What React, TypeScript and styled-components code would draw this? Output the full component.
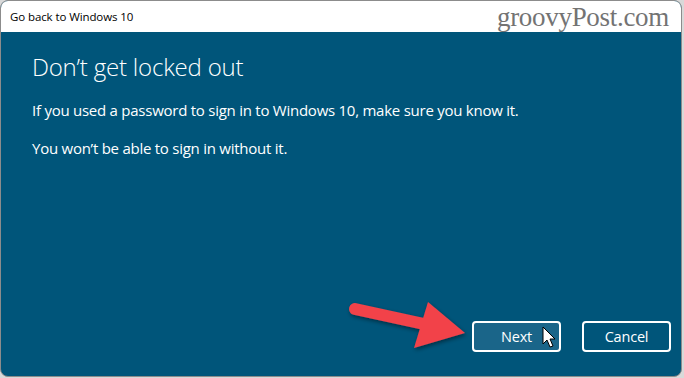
import styled, { createGlobalStyle } from 'styled-components';

const GlobalStyle = createGlobalStyle`
  html, body {
    margin: 0;
    padding: 0;
    background: #d9d9d9;
  }
  #root {
    width: 684px;
    height: 378px;
  }
`;

const Window = styled.div`
  position: relative;
  box-sizing: border-box;
  width: 682px;
  height: 377px;
  display: flex;
  flex-direction: column;
  border: 1px solid #8c8c8c;
  border-radius: 8px;
  overflow: hidden;
  background: #00557a;
  font-family: 'Open Sans', 'Noto Sans', sans-serif;
`;

const TitleBar = styled.div`
  height: 31px;
  flex: none;
  display: flex;
  align-items: center;
  padding-left: 9px;
  background: #ffffff;
  color: #000000;
  font-size: 11.5px;
  letter-spacing: -0.1px;
`;

const Content = styled.div`
  flex: 1;
  display: flex;
  flex-direction: column;
  padding: 20px 0 0 31px;
  color: #ffffff;
`;

const Heading = styled.h1`
  margin: 0 0 18px;
  font-size: 24px;
  font-weight: 300;
  line-height: 30px;
  letter-spacing: -0.2px;
`;

const Paragraph = styled.p`
  margin: 0 0 18px;
  font-size: 15px;
  line-height: 20px;
  letter-spacing: -0.25px;
`;

const Footer = styled.div`
  margin-top: auto;
  display: flex;
  justify-content: flex-end;
  gap: 21px;
  padding: 0 10px 24px 0;
`;

const Button = styled.button<{ $primary?: boolean }>`
  box-sizing: border-box;
  width: 89px;
  height: 31px;
  border: 2px solid #ffffff;
  border-radius: 4px;
  background: ${(p) => (p.$primary ? '#1a6589' : 'transparent')};
  color: #ffffff;
  font-family: 'Open Sans', 'Noto Sans', sans-serif;
  font-size: 14.5px;
  letter-spacing: -0.2px;
  padding: 0;
`;

const Watermark = styled.div`
  position: absolute;
  top: 3px;
  right: 12px;
  font-family: 'Liberation Serif', 'DejaVu Serif', serif;
  font-size: 27px;
  line-height: 27px;
  color: #737373;
  letter-spacing: -0.3px;
`;

const Overlay = styled.svg`
  position: absolute;
  left: -1px;
  top: -1px;
  width: 684px;
  height: 378px;
  pointer-events: none;
`;

function Annotations() {
  return (
    <Overlay viewBox="0 0 684 378">
      <defs>
        <filter id="shadow" x="-20%" y="-20%" width="140%" height="140%">
          <feDropShadow dx="1" dy="2" stdDeviation="2" floodColor="#000" floodOpacity="0.45" />
        </filter>
      </defs>
      <g filter="url(#shadow)" fill="#f2434a">
        <line x1="355" y1="309" x2="424" y2="324" stroke="#f2434a" strokeWidth="12" strokeLinecap="round" />
        <polygon points="428,302 465,333 414,348 421,325" />
      </g>
      <path
        d="M543 327 L543 344 L547 340 L550 347 L553 346 L550 339 L555 339 Z"
        fill="#ffffff"
        stroke="#000000"
        strokeWidth="1"
        strokeLinejoin="round"
      />
    </Overlay>
  );
}

export default function App() {
  return (
    <>
      <GlobalStyle />
      <Window>
        <TitleBar>Go back to Windows 10</TitleBar>
        <Content>
          <Heading>Don’t get locked out</Heading>
          <Paragraph>If you used a password to sign in to Windows 10, make sure you know it.</Paragraph>
          <Paragraph>You won’t be able to sign in without it.</Paragraph>
          <Footer>
            <Button $primary>Next</Button>
            <Button>Cancel</Button>
          </Footer>
        </Content>
        <Watermark>groovyPost.com</Watermark>
        <Annotations />
      </Window>
    </>
  );
}
